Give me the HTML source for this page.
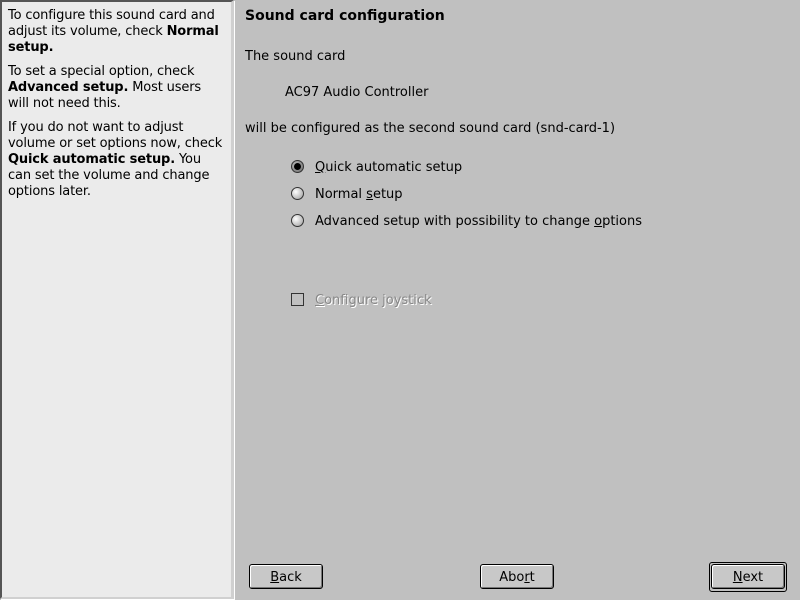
<!DOCTYPE html>
<html><head><style>
body{margin:0;width:800px;height:600px;background:#c0c0c0;font-family:"DejaVu Sans","Liberation Sans",sans-serif;font-size:13px;color:#000;position:relative;overflow:hidden}
.left{position:absolute;left:0;top:0;width:229px;height:595px;background:#ebebeb;border-top:2px solid #555;border-left:2px solid #555;border-right:3px solid #d0d0d0;border-bottom:2px solid #d0d0d0;box-shadow:1px 1px 0 #fff}
.left p{margin:0 0 8px 0;padding:0 8px 0 6px;line-height:16px;letter-spacing:-0.15px}
.left .in{padding-top:6px}
.t{position:absolute;white-space:nowrap}
.radio{position:absolute;width:11px;height:11px;border-radius:50%;border:1px solid #333;background:radial-gradient(circle at 35% 35%,#fff,#999)}
.radio.on{background:radial-gradient(circle at 35% 35%,#bbb,#666)}
.radio.on::after{content:"";position:absolute;left:2px;top:2px;width:7px;height:7px;border-radius:50%;background:#000}
.btn{position:absolute;height:23px;border:1px solid #000;border-radius:3px;background:#c8c8c8;box-shadow:inset 1px 1px 0 #fff,inset -1px -1px 0 #777;text-align:center;line-height:25px}
u{text-decoration:underline}
</style></head><body>
<div class="left"><div class="in">
<p>To configure this sound card and adjust its volume, check <b>Normal setup.</b></p>
<p>To set a special option, check <b>Advanced setup.</b> Most users will not need this.</p>
<p>If you do not want to adjust volume or set options now, check <b>Quick automatic setup.</b> You can set the volume and change options later.</p>
</div></div>
<div class="t" style="left:245px;top:8px;font-weight:bold;font-size:14px">Sound card configuration</div>
<div class="t" style="left:245px;top:49px">The sound card</div>
<div class="t" style="left:285px;top:85px">AC97 Audio Controller</div>
<div class="t" style="left:245px;top:121px">will be configured as the second sound card (snd-card-1)</div>
<div class="radio on" style="left:291px;top:160px"></div>
<div class="t" style="left:315px;top:160px"><u>Q</u>uick automatic setup</div>
<div class="radio" style="left:291px;top:187px"></div>
<div class="t" style="left:315px;top:187px">Normal <u>s</u>etup</div>
<div class="radio" style="left:291px;top:214px"></div>
<div class="t" style="left:315px;top:214px">Advanced setup with possibility to change <u>o</u>ptions</div>
<div style="position:absolute;left:291px;top:293px;width:11px;height:11px;border:1px solid #333;background:#c0c0c0"></div>
<div class="t" style="left:315px;top:293px;color:#888;text-shadow:1px 1px 0 #fff"><u>C</u>onfigure joystick</div>
<div class="btn" style="left:249px;top:564px;width:72px"><u>B</u>ack</div>
<div class="btn" style="left:480px;top:564px;width:72px">Abo<u>r</u>t</div>
<div style="position:absolute;left:709px;top:562px;width:76px;height:28px;border:1px solid #000;border-radius:3px"></div>
<div class="btn" style="left:711px;top:564px;width:72px"><u>N</u>ext</div>
</body></html>
